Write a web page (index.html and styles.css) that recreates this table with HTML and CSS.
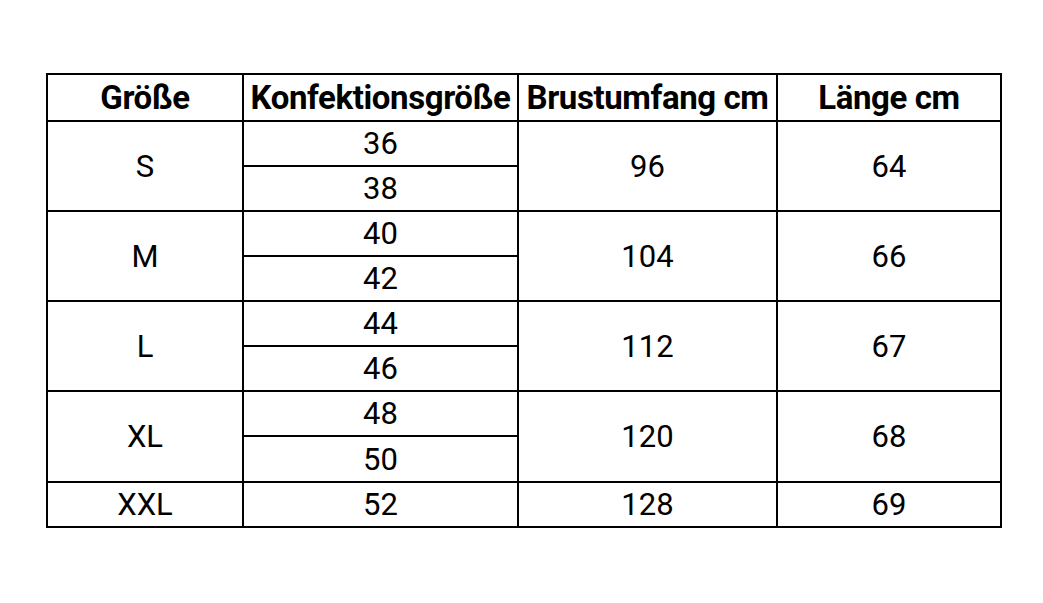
FILE: index.html
```html
<!DOCTYPE html>
<html lang="de">
<head>
<meta charset="utf-8">
<link rel="stylesheet" href="styles.css">
</head>
<body>
<table class="size-table">
  <colgroup>
    <col class="c1"><col class="c2"><col class="c3"><col class="c4">
  </colgroup>
  <thead>
    <tr class="head">
      <th>Größe</th><th>Konfektionsgröße</th><th>Brustumfang cm</th><th>Länge cm</th>
    </tr>
  </thead>
  <tbody>
    <tr><td rowspan="2">S</td><td>36</td><td rowspan="2">96</td><td rowspan="2">64</td></tr>
    <tr><td>38</td></tr>
    <tr><td rowspan="2">M</td><td>40</td><td rowspan="2">104</td><td rowspan="2">66</td></tr>
    <tr><td>42</td></tr>
    <tr><td rowspan="2">L</td><td>44</td><td rowspan="2">112</td><td rowspan="2">67</td></tr>
    <tr><td>46</td></tr>
    <tr><td rowspan="2">XL</td><td>48</td><td rowspan="2">120</td><td rowspan="2">68</td></tr>
    <tr class="tall"><td>50</td></tr>
    <tr><td>XXL</td><td>52</td><td>128</td><td>69</td></tr>
  </tbody>
</table>
</body>
</html>
```
FILE: styles.css
```css
html, body {
  margin: 0;
  padding: 0;
  background: #ffffff;
}
body {
  padding: 73px 0 0 46px;
}
.size-table {
  border-collapse: collapse;
  table-layout: fixed;
  width: 954px;
  font-family: Roboto, "Liberation Sans", sans-serif;
  color: #000;
}
.c1 { width: 196px; }
.c2 { width: 275px; }
.c3 { width: 259px; }
.c4 { width: 224px; }
.size-table th,
.size-table td {
  border: 2px solid #000;
  padding: 0;
  text-align: center;
  vertical-align: middle;
  white-space: nowrap;
  overflow: hidden;
}
.size-table tr {
  height: 45px;
}
.size-table tr.head {
  height: 47px;
}
.size-table tr.tall {
  height: 46px;
}
.size-table th {
  font-weight: 700;
  font-size: 33px;
  letter-spacing: -0.4px;
  line-height: 1;
}
.size-table td {
  font-weight: 400;
  font-size: 31px;
  line-height: 1;
}
```
